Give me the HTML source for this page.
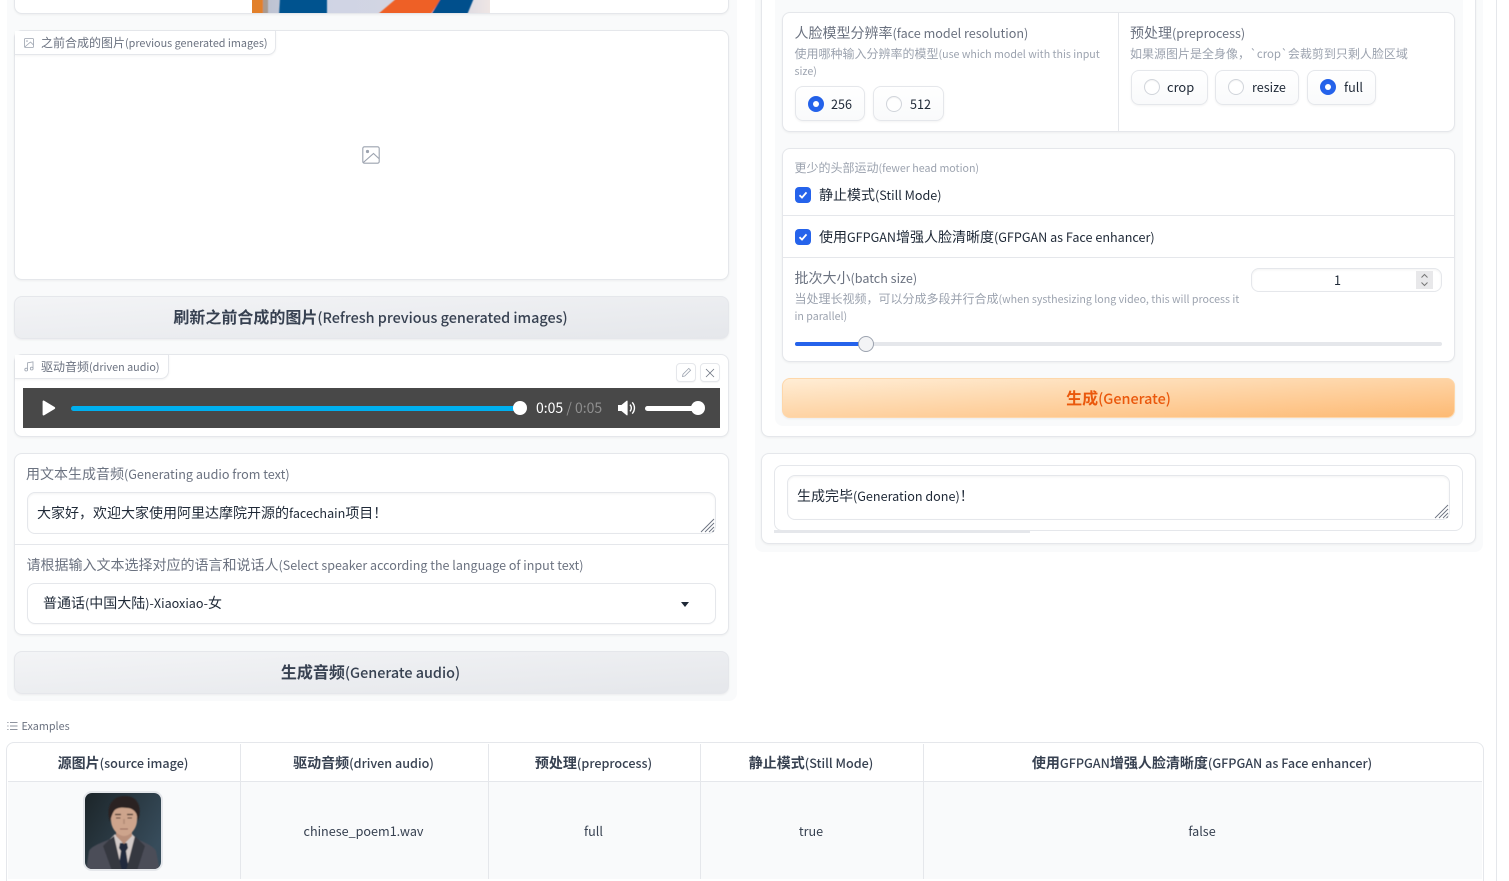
<!DOCTYPE html>
<html lang="zh"><head><meta charset="utf-8"><title>SadTalker</title>
<style>
*{box-sizing:border-box}
html,body{margin:0;padding:0;width:1509px;height:881px;overflow:hidden;background:#fff}
body{font-family:"Noto Sans CJK SC","Liberation Sans",sans-serif;color:#374151;font-size:14px;position:relative}
i{font-style:normal;font-size:.9em}
.a{position:absolute}
.t{position:absolute;white-space:nowrap;line-height:20px}
.panel{position:absolute;background:#fff;border:1px solid #e5e7eb;border-radius:8px;box-shadow:0 1px 2px rgba(0,0,0,.05)}
.btn{position:absolute;border-radius:8px;background:linear-gradient(to bottom right,#f3f4f6,#e5e7eb);border:1px solid #e5e7eb;box-shadow:0 1px 2px rgba(0,0,0,.06);text-align:center;font-weight:700;color:#374151}
.btn i,.th i{font-weight:500}
.lab{color:#6b7280}.info{color:#9ca3af;font-size:12px}
.info i{font-size:.888em}
.tab{position:absolute;background:#fff;border:1px solid #e5e7eb;border-top:0;border-left:0;border-radius:0 0 8px 0;box-shadow:0 1px 2px rgba(0,0,0,.05);color:#6b7280;font-size:12px}
.radio{position:absolute;background:linear-gradient(#fff,#f9fafb);border:1px solid #e5e7eb;border-radius:8px;box-shadow:0 1px 2px rgba(0,0,0,.05);color:#1f2937}
.dot{position:absolute;width:16px;height:16px;border-radius:50%;border:1px solid #d1d5db;background:#fff;box-shadow:inset 0 1px 1px rgba(0,0,0,.05)}
.dot.on{background:#2563eb;border-color:#2563eb}
.dot.on:after{content:"";position:absolute;left:4px;top:4px;width:6px;height:6px;border-radius:50%;background:#fff}
.check{position:absolute;width:16px;height:16px;border-radius:4px;background:#2563eb}
.input{position:absolute;background:#fff;border:1px solid #e5e7eb;border-radius:8px;box-shadow:inset 0 1px 2px rgba(0,0,0,.05);color:#1f2937}
.hline{position:absolute;height:1px;background:#e5e7eb}
.vline{position:absolute;width:1px;background:#e5e7eb}
.th{position:absolute;top:744px;height:37px;line-height:37px;text-align:center;font-weight:700;color:#374151;font-size:14px;white-space:nowrap}
.td{position:absolute;top:782px;height:97px;line-height:98px;text-align:center;color:#374151;font-size:14px}
</style></head><body>

<!-- left column background -->
<div class="a" style="left:7px;top:-10px;width:730px;height:711px;background:#f9fafb;border-radius:8px"></div>

<!-- top image panel -->
<div class="panel" style="left:14px;top:-20px;width:715px;height:34px;overflow:hidden"></div>
<svg class="a" style="left:252px;top:0" width="238" height="13" viewBox="0 0 238 13">
<defs><filter id="b1" x="-5%" y="-5%" width="110%" height="110%"><feGaussianBlur stdDeviation=".6"/></filter>
<linearGradient id="lg" x1="0" y1="0" x2="1" y2="0"><stop offset="0" stop-color="#b8bdcc"/><stop offset=".3" stop-color="#cfd4e4"/><stop offset=".85" stop-color="#d5d6e2"/><stop offset="1" stop-color="#efe6e4"/></linearGradient></defs>
<rect width="238" height="13" fill="url(#lg)"/>
<g filter="url(#b1)">
<rect x="-2" y="-2" width="13" height="17" fill="#e2802a"/>
<rect x="11" y="-2" width="5" height="17" fill="#a89a90"/>
<polygon points="27,15 28,-2 75,-2 75,15" fill="#03538f"/>
<polygon points="125,15 145,-2 190,-2 178,15" fill="#ee6125"/>
<polygon points="179,15 189,-2 222,-2 215,15" fill="#064f8c"/>
</g>
</svg>

<!-- previous images -->
<div class="panel" style="left:14px;top:30px;width:715px;height:250px"></div>
<div class="tab" style="left:15px;top:31px;width:261px;height:24px"></div>
<svg class="a" style="left:24px;top:38px" width="10" height="10" viewBox="0 0 10 10" fill="none" stroke="#9ca3af" stroke-width=".8"><rect x=".5" y=".5" width="9" height="9" rx="1"/><path d="M.8 9 6.5 4 9.5 7"/><circle cx="3" cy="3" r=".8" fill="#9ca3af" stroke="none"/></svg>
<div class="t lab" style="left:41px;top:33px;font-size:12px">之前合成的图片<i>(previous generated images)</i></div>
<svg class="a" style="left:362px;top:146px" width="18" height="18" viewBox="0 0 18 18" fill="none" stroke="#9ca3af" stroke-width="1.1"><rect x=".8" y=".8" width="16.4" height="16.4" rx="1.6"/><circle cx="5.5" cy="5.5" r="1.6" fill="#9ca3af" stroke="none"/><path d="M1.2 16.6 11.5 7.5 17 12.6"/></svg>

<div class="btn" style="left:13px;top:296px;width:715px;height:43px;line-height:39px;font-size:16px;background:none;border-color:transparent;box-shadow:none;z-index:2">刷新之前合成的图片<i>(Refresh previous generated images)</i></div>
<div class="btn" style="left:14px;top:296px;width:715px;height:43px"></div>

<!-- audio -->
<div class="panel" style="left:14px;top:354px;width:715px;height:83px"></div>
<div class="tab" style="left:15px;top:355px;width:154px;height:24px"></div>
<svg class="a" style="left:24px;top:361px" width="10" height="11" viewBox="0 0 10 11" fill="none" stroke="#9ca3af" stroke-width=".8"><path d="M3.5 8.5V1.8L9 .8v6.7"/><circle cx="2.2" cy="8.6" r="1.4"/><circle cx="7.7" cy="7.6" r="1.4"/></svg>
<div class="t lab" style="left:41px;top:357px;font-size:12px">驱动音频<i>(driven audio)</i></div>
<div class="a" style="left:676px;top:363px;width:20px;height:19px;border:1px solid #e5e7eb;border-radius:4px;background:#fff;box-shadow:0 1px 1px rgba(0,0,0,.04)"></div>
<svg class="a" style="left:681px;top:367px" width="11" height="11" viewBox="0 0 11 11" fill="none" stroke="#9ca3af" stroke-width=".8"><path d="M1.5 9.5 2 7.2 7.8 1.4 9.6 3.2 3.8 9Z"/></svg>
<div class="a" style="left:700px;top:363px;width:20px;height:19px;border:1px solid #e5e7eb;border-radius:4px;background:#fff;box-shadow:0 1px 1px rgba(0,0,0,.04)"></div>
<svg class="a" style="left:705px;top:368px" width="10" height="10" viewBox="0 0 10 10" stroke="#6b7280" stroke-width=".8"><path d="M1 1 9 9M9 1 1 9"/></svg>

<div class="a" style="left:23px;top:388px;width:697px;height:40px;background:#484848"></div>
<svg class="a" style="left:41px;top:400px" width="15" height="16" viewBox="0 0 15 16"><path d="M1.6 1.6C1.6.6 2.4.2 3.2.7L13.6 7c.8.5.8 1.5 0 2L3.2 15.3c-.8.5-1.6.1-1.6-.9Z" fill="#fff"/></svg>
<div class="a" style="left:71px;top:405.5px;width:448px;height:5px;border-radius:3px;background:#00b0ef"></div>
<div class="a" style="left:512.500px;top:401px;width:14px;height:14px;border-radius:50%;background:#fff"></div>
<div class="t" style="left:536px;top:398px;color:#fff;font-size:14px">0:05<span style="color:#8f8f8f"> / 0:05</span></div>
<svg class="a" style="left:618px;top:400px" width="18" height="16" viewBox="0 0 18 16"><path d="M0 5h3.4L8.6.8c.5-.3 1-.1 1 .5v13.4c0 .6-.5.8-1 .5L3.4 11H0Z" fill="#fff"/><path d="M12 4.6c1.8 2 1.8 4.8 0 6.8M14.2 2.4c3 3.2 3 8 0 11.2" stroke="#fff" stroke-width="1.4" fill="none"/></svg>
<div class="a" style="left:645px;top:405.5px;width:54px;height:5px;border-radius:3px;background:#fff"></div>
<div class="a" style="left:691px;top:401px;width:14px;height:14px;border-radius:50%;background:#fff"></div>

<!-- text to audio -->
<div class="panel" style="left:14px;top:453px;width:715px;height:182px"></div>
<div class="t lab" style="left:26px;top:464px">用文本生成音频<i>(Generating audio from text)</i></div>
<div class="input" style="left:27px;top:492px;width:689px;height:42px"></div>
<div class="t" style="left:37px;top:503px;color:#1f2937">大家好，欢迎大家使用阿里达摩院开源的<i>facechain</i>项目！</div>
<svg class="a" style="left:700px;top:518px" width="15" height="15" viewBox="0 0 15 15" stroke="#6b7280" stroke-width=".9"><path d="M1 14 14 1M5 14 14 5M9 14 14 9M12.5 14 14 12.5"/></svg>
<div class="hline" style="left:15px;top:544px;width:713px"></div>
<div class="t lab" style="left:26.500px;top:555px">请根据输入文本选择对应的语言和说话人<i style="font-size:.895em">(Select speaker according the language of input text)</i></div>
<div class="input" style="left:27px;top:583px;width:689px;height:41px;box-shadow:0 1px 1px rgba(0,0,0,.03)"></div>
<div class="t" style="left:43px;top:593px;color:#1f2937">普通话<i>(</i>中国大陆<i>)-Xiaoxiao-</i>女</div>
<div class="a" style="left:681px;top:602px;width:0;height:0;border-left:4px solid transparent;border-right:4px solid transparent;border-top:5px solid #1f2937"></div>

<div class="btn" style="left:14px;top:651px;width:715px;height:43px"></div>
<div class="btn" style="left:13px;top:651px;width:715px;height:43px;line-height:39px;font-size:16px;background:none;border-color:transparent;box-shadow:none;z-index:2">生成音频<i>(Generate audio)</i></div>

<!-- right column -->
<div class="a" style="left:755px;top:-10px;width:728px;height:562px;background:#f9fafb;border-radius:8px"></div>
<div class="panel" style="left:761px;top:-10px;width:715px;height:447px"></div>
<div class="a" style="left:775px;top:-10px;width:688px;height:436px;background:#f9fafb;border-radius:8px"></div>

<div class="panel" style="left:782px;top:12px;width:673px;height:120px"></div>
<div class="vline" style="left:1118px;top:13px;height:118px"></div>
<div class="t lab" style="left:794.500px;top:23px">人脸模型分辨率<i>(face model resolution)</i></div>
<div class="t info" style="left:794.500px;top:44px">使用哪种输入分辨率的模型<i>(use which model with this input</i></div>
<div class="t info" style="left:794.500px;top:61px"><i>size)</i></div>
<div class="radio" style="left:795px;top:86px;width:70px;height:35px"></div>
<div class="dot on" style="left:808px;top:96px"></div>
<div class="t" style="left:831px;top:94px;color:#1f2937"><i>256</i></div>
<div class="radio" style="left:873px;top:86px;width:71px;height:35px"></div>
<div class="dot" style="left:886px;top:96px"></div>
<div class="t" style="left:910px;top:94px;color:#1f2937"><i>512</i></div>

<div class="t lab" style="left:1130px;top:23px">预处理<i>(preprocess)</i></div>
<div class="t info" style="left:1130px;top:44px">如果源图片是全身像，<i style="font-size:.95em">`crop`</i>会裁剪到只剩人脸区域</div>
<div class="radio" style="left:1131px;top:70px;width:77px;height:35px"></div>
<div class="dot" style="left:1144px;top:79px"></div>
<div class="t" style="left:1167px;top:77px;color:#1f2937"><i style="font-size:.92em">crop</i></div>
<div class="radio" style="left:1215px;top:70px;width:84px;height:35px"></div>
<div class="dot" style="left:1228px;top:79px"></div>
<div class="t" style="left:1252px;top:77px;color:#1f2937"><i>resize</i></div>
<div class="radio" style="left:1307px;top:70px;width:69px;height:35px"></div>
<div class="dot on" style="left:1320px;top:79px"></div>
<div class="t" style="left:1344px;top:77px;color:#1f2937"><i>full</i></div>

<div class="panel" style="left:782px;top:148px;width:673px;height:214px"></div>
<div class="t info" style="left:794.500px;top:158px">更少的头部运动<i>(fewer head motion)</i></div>
<div class="check" style="left:795px;top:187px"></div>
<svg class="a" style="left:795px;top:187px" width="16" height="16" viewBox="0 0 16 16" fill="none" stroke="#fff" stroke-width="1.8"><path d="M4.5 8.2 7 10.6 11.5 5.4"/></svg>
<div class="t" style="left:819px;top:185px;color:#1f2937">静止模式<i>(Still Mode)</i></div>
<div class="hline" style="left:783px;top:215px;width:671px"></div>
<div class="check" style="left:795px;top:229px"></div>
<svg class="a" style="left:795px;top:229px" width="16" height="16" viewBox="0 0 16 16" fill="none" stroke="#fff" stroke-width="1.8"><path d="M4.5 8.2 7 10.6 11.5 5.4"/></svg>
<div class="t" style="left:819px;top:227px;color:#1f2937">使用<i>GFPGAN</i>增强人脸清晰度<i>(GFPGAN as Face enhancer)</i></div>
<div class="hline" style="left:783px;top:257px;width:671px"></div>
<div class="t lab" style="left:794.500px;top:268px">批次大小<i>(batch size)</i></div>
<div class="t info" style="left:794.500px;top:289px">当处理长视频，可以分成多段并行合成<i>(when systhesizing long video, this will process it</i></div>
<div class="t info" style="left:794.500px;top:306px"><i>in parallel)</i></div>
<div class="input" style="left:1251px;top:268px;width:191px;height:24px"></div>
<div class="t" style="left:1334px;top:270px;color:#1f2937"><i>1</i></div>
<div class="a" style="left:1416px;top:271px;width:17px;height:18px;background:#e8e8ea"></div>
<svg class="a" style="left:1416px;top:271px" width="17" height="18" viewBox="0 0 17 18" fill="none" stroke="#777" stroke-width="1"><path d="M5.5 6.5 8.5 3.5 11.5 6.5M5.5 11.5 8.5 14.5 11.5 11.5"/></svg>
<div class="a" style="left:795px;top:342px;width:647px;height:4px;border-radius:2px;background:#e5e7eb"></div>
<div class="a" style="left:795px;top:342px;width:70px;height:4px;border-radius:2px 0 0 2px;background:#2563eb"></div>
<div class="a" style="left:858px;top:336px;width:16px;height:16px;border-radius:50%;background:#f3f4f6;border:1px solid #9ca3af"></div>

<div class="btn" style="left:782px;top:378px;width:673px;height:40px;line-height:37px;font-size:16px;color:#ea580c;border-color:#fed7aa;background:linear-gradient(to bottom right,#ffedd5,#fdba74)">生成<i>(Generate)</i></div>

<div class="panel" style="left:761px;top:453px;width:715px;height:91px"></div>
<div class="panel" style="left:774px;top:465px;width:689px;height:66px;box-shadow:none"></div>
<div class="input" style="left:787px;top:475px;width:663px;height:45px"></div>
<div class="t" style="left:797px;top:486px;color:#1f2937">生成完毕<i>(Generation done)</i>！</div>
<svg class="a" style="left:1434px;top:504px" width="15" height="15" viewBox="0 0 15 15" stroke="#6b7280" stroke-width=".9"><path d="M1 14 14 1M5 14 14 5M9 14 14 9M12.5 14 14 12.5"/></svg>
<div class="a" style="left:774px;top:530px;width:256px;height:3px;background:#e5e7eb"></div>

<!-- scrollbar rule -->
<div class="vline" style="left:1496px;top:0;height:881px"></div>

<!-- examples -->
<svg class="a" style="left:7px;top:721px" width="11" height="10" viewBox="0 0 11 10" stroke="#6b7280" stroke-width=".8"><path d="M3 1.5h7.5M3 5h7.5M3 8.5h7.5"/><path d="M.3 1.5h1.2M.3 5h1.2M.3 8.5h1.2"/></svg>
<div class="t" style="left:21.500px;top:716px;font-size:12px;color:#6b7280"><i>Examples</i></div>

<div class="a" style="left:6px;top:742px;width:1478px;height:150px;border:1px solid #e5e7eb;border-radius:8px;background:#fff"></div>
<div class="a" style="left:8px;top:782px;width:1474px;height:97px;background:#f9fafb"></div>
<div class="hline" style="left:8px;top:781px;width:1474px"></div>
<div class="vline" style="left:240px;top:744px;height:135px"></div>
<div class="vline" style="left:488px;top:744px;height:135px"></div>
<div class="vline" style="left:700px;top:744px;height:135px"></div>
<div class="vline" style="left:923px;top:744px;height:135px"></div>

<div class="th" style="left:7px;width:232px">源图片<i>(source image)</i></div>
<div class="th" style="left:240px;width:247px">驱动音频<i>(driven audio)</i></div>
<div class="th" style="left:488px;width:211px">预处理<i>(preprocess)</i></div>
<div class="th" style="left:700px;width:222px">静止模式<i>(Still Mode)</i></div>
<div class="th" style="left:923px;width:558px">使用<i>GFPGAN</i>增强人脸清晰度<i>(GFPGAN as Face enhancer)</i></div>

<div class="a" style="left:83px;top:791px;width:80px;height:80px;border:2px solid #e5e7eb;border-radius:9px;background:#fff"></div>
<svg class="a" style="left:85px;top:793px;border-radius:7px" width="76" height="76" viewBox="0 0 76 76">
<defs><linearGradient id="bg" x1="0" y1="0" x2="1" y2=".6"><stop offset="0" stop-color="#1c2529"/><stop offset="1" stop-color="#374c5b"/></linearGradient>
<filter id="s" x="-5%" y="-5%" width="110%" height="110%"><feGaussianBlur stdDeviation=".5"/></filter></defs>
<rect width="76" height="76" fill="url(#bg)"/>
<g filter="url(#s)">
<path d="M1 78 4 58C7 52 20 49 29 44L49 44C57 49 68 52 71 58L75 78Z" fill="#4b4d58"/>
<path d="M30 41 39 51 47 41 52 46 42 78H34L25 46Z" fill="#d3cac8"/>
<path d="M35 50h7l1 5-2 3 3 20H33l3-20-2-3Z" fill="#222c3c"/>
<path d="M29 43 37 78H27L18 53 24 47ZM50 43 41 78H52L60 53 54 47Z" fill="#363741"/>
<path d="M31 32h16v11l-8 8-8-8Z" fill="#b98f7a"/>
<path d="M26 17C26 11 32 8 39 8S52 11 52 17V27C52 36 45 43 39 43S26 36 26 27Z" fill="#cda48c"/>
<path d="M25 29C20 14 27 3 40 3 52 3 58 13 53 28L51.500 21C50 18 47 15 42 15 36 14 31 15 29 18 27 21 26 25 25 29Z" fill="#2b2423"/>
<path d="M30 21.500h6M42 21.500h6" stroke="#3a2a24" stroke-width="1.200"/>
<path d="M31 25h4.500M42.500 25H47" stroke="#4a3229" stroke-width="1"/>
<path d="M39 26v5" stroke="#b08a74" stroke-width="1.500"/>
<path d="M35 36h8" stroke="#95655a" stroke-width="1"/>
</g>
</svg>

<div class="td" style="left:240px;width:247px"><i>chinese_poem1.wav</i></div>
<div class="td" style="left:488px;width:211px"><i>full</i></div>
<div class="td" style="left:700px;width:222px"><i>true</i></div>
<div class="td" style="left:923px;width:558px"><i>false</i></div>

</body></html>
